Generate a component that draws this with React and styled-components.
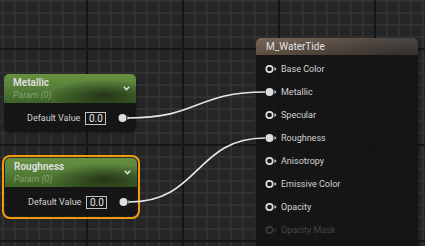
import styled, { createGlobalStyle, css } from "styled-components";

const GlobalStyle = createGlobalStyle`
  html, body {
    margin: 0;
    padding: 0;
    overflow: hidden;
  }
  body {
    font-family: Roboto, "Liberation Sans", sans-serif;
  }
`;

const Canvas = styled.div`
  position: relative;
  width: 100vw;
  height: 100vh;
  overflow: hidden;
  background-color: #252525;
  background-image:
    linear-gradient(to right, #151515 2px, transparent 2px),
    linear-gradient(to bottom, #151515 2px, transparent 2px),
    linear-gradient(to right, #313131 2px, transparent 2px),
    linear-gradient(to bottom, #313131 2px, transparent 2px);
  background-size: 96px 96px, 96px 96px, 12px 12px, 12px 12px;
  background-position: 86px 0, 0 48px, 2px 0, 0 0;
`;

const Node = styled.div`
  position: absolute;
  left: ${({ $x }) => $x}px;
  top: ${({ $y }) => $y}px;
  width: ${({ $w }) => $w}px;
  height: ${({ $h }) => ($h ? `${$h}px` : "auto")};
  display: flex;
  flex-direction: column;
  border-radius: 5px;
  overflow: hidden;
  background: rgba(19, 20, 19, 0.92);
  box-shadow: 0 1px 3px rgba(0, 0, 0, 0.6);
  ${({ $selected }) =>
    $selected &&
    css`
      outline: 2px solid #ef9b12;
      outline-offset: 1px;
    `}
`;

const ParamHeader = styled.div`
  height: 29px;
  box-sizing: border-box;
  padding: 3px 6px 0 9px;
  display: flex;
  align-items: flex-start;
  justify-content: space-between;
  background:
    radial-gradient(ellipse 42% 55% at 76% 74%, rgba(20, 28, 12, 0.7), transparent),
    linear-gradient(180deg, #67903f 0%, #57813a 45%, #3e6127 100%);
`;

const TitleBlock = styled.div`
  display: flex;
  flex-direction: column;
`;

const NodeTitle = styled.span`
  font-size: 10px;
  font-weight: 700;
  line-height: 12px;
  color: #dcdcdc;
`;

const NodeSub = styled.span`
  font-size: 9px;
  font-style: italic;
  line-height: 12px;
  color: rgba(185, 205, 160, 0.55);
`;

const Chevron = styled.svg`
  margin-top: 9px;
  width: 7px;
  height: 5px;
`;

const ParamBody = styled.div`
  flex: 1;
  display: flex;
  align-items: flex-start;
  padding: 8px 0 0 23px;
  box-sizing: border-box;
`;

const ValueRow = styled.div`
  display: flex;
  align-items: center;
  height: 14px;
`;

const ValueLabel = styled.span`
  font-size: 9px;
  color: #d2d2d2;
  margin-right: 5px;
`;

const ValueBox = styled.span`
  width: 21px;
  height: 13px;
  box-sizing: border-box;
  border: 1px solid #c4c4c4;
  font-size: 10px;
  line-height: 11px;
  text-align: center;
  color: #e4e4e4;
  margin-right: 12px;
`;

const OutputHeader = styled.div`
  height: 17px;
  box-sizing: border-box;
  padding-left: 10px;
  font-size: 10px;
  line-height: 17px;
  color: #e2e2e2;
  background:
    linear-gradient(180deg, rgba(255, 255, 255, 0.08), rgba(0, 0, 0, 0.15)),
    linear-gradient(90deg, #6d5c4b 0%, #584a3f 40%, #453c36 75%, #3b3633 100%);
`;

const PinList = styled.div`
  display: flex;
  flex-direction: column;
  padding: 2px 0 0 9px;
`;

const PinRow = styled.div`
  display: flex;
  align-items: center;
  gap: 4px;
  height: 23px;
  font-size: 9px;
  color: ${({ $dim }) => ($dim ? "#454545" : "#d2d2d2")};
`;

const Wires = styled.svg`
  position: absolute;
  inset: 0;
  width: 100%;
  height: 100%;
  pointer-events: none;
`;

function Pin({ filled, dim }) {
  const c = dim ? "#3a3a3a" : "#dedede";
  return (
    <svg width="12" height="10" viewBox="0 0 12 10">
      {filled ? (
        <circle cx="4.5" cy="5" r="4" fill={c} />
      ) : (
        <circle cx="4.5" cy="5" r="3.2" fill="none" stroke={c} strokeWidth="1.7" />
      )}
      <polygon points="9.5,3 11.5,5 9.5,7" fill={c} />
    </svg>
  );
}

function ParamNode({ x, y, title, selected }) {
  return (
    <Node $x={x} $y={y} $w={132} $h={58} $selected={selected}>
      <ParamHeader>
        <TitleBlock>
          <NodeTitle>{title}</NodeTitle>
          <NodeSub>Param (0)</NodeSub>
        </TitleBlock>
        <Chevron viewBox="0 0 7 5">
          <polyline points="0.8,0.8 3.5,3.8 6.2,0.8" fill="none" stroke="#e8e8e8" strokeWidth="1.4" />
        </Chevron>
      </ParamHeader>
      <ParamBody>
        <ValueRow>
          <ValueLabel>Default Value</ValueLabel>
          <ValueBox>0.0</ValueBox>
          <Pin filled />
        </ValueRow>
      </ParamBody>
    </Node>
  );
}

const outputs = [
  { name: "Base Color" },
  { name: "Metallic", filled: true },
  { name: "Specular" },
  { name: "Roughness", filled: true },
  { name: "Anisotropy" },
  { name: "Emissive Color" },
  { name: "Opacity" },
  { name: "Opacity Mask", dim: true },
];

export default function App() {
  return (
    <Canvas>
      <GlobalStyle />
      <ParamNode x={4} y={74} title="Metallic" />
      <ParamNode x={5} y={158} title="Roughness" selected />
      <Node $x={256} $y={38} $w={162} $h={230}>
        <OutputHeader>M_WaterTide</OutputHeader>
        <PinList>
          {outputs.map((o) => (
            <PinRow key={o.name} $dim={o.dim}>
              <Pin filled={o.filled} dim={o.dim} />
              {o.name}
            </PinRow>
          ))}
        </PinList>
      </Node>
      <Wires>
        <path d="M 128 118 C 200 118 195 92 265 92" fill="none" stroke="#e6e6e6" strokeWidth="1.6" />
        <path d="M 129 202 C 200 202 195 138 265 138" fill="none" stroke="#e6e6e6" strokeWidth="1.6" />
      </Wires>
    </Canvas>
  );
}
